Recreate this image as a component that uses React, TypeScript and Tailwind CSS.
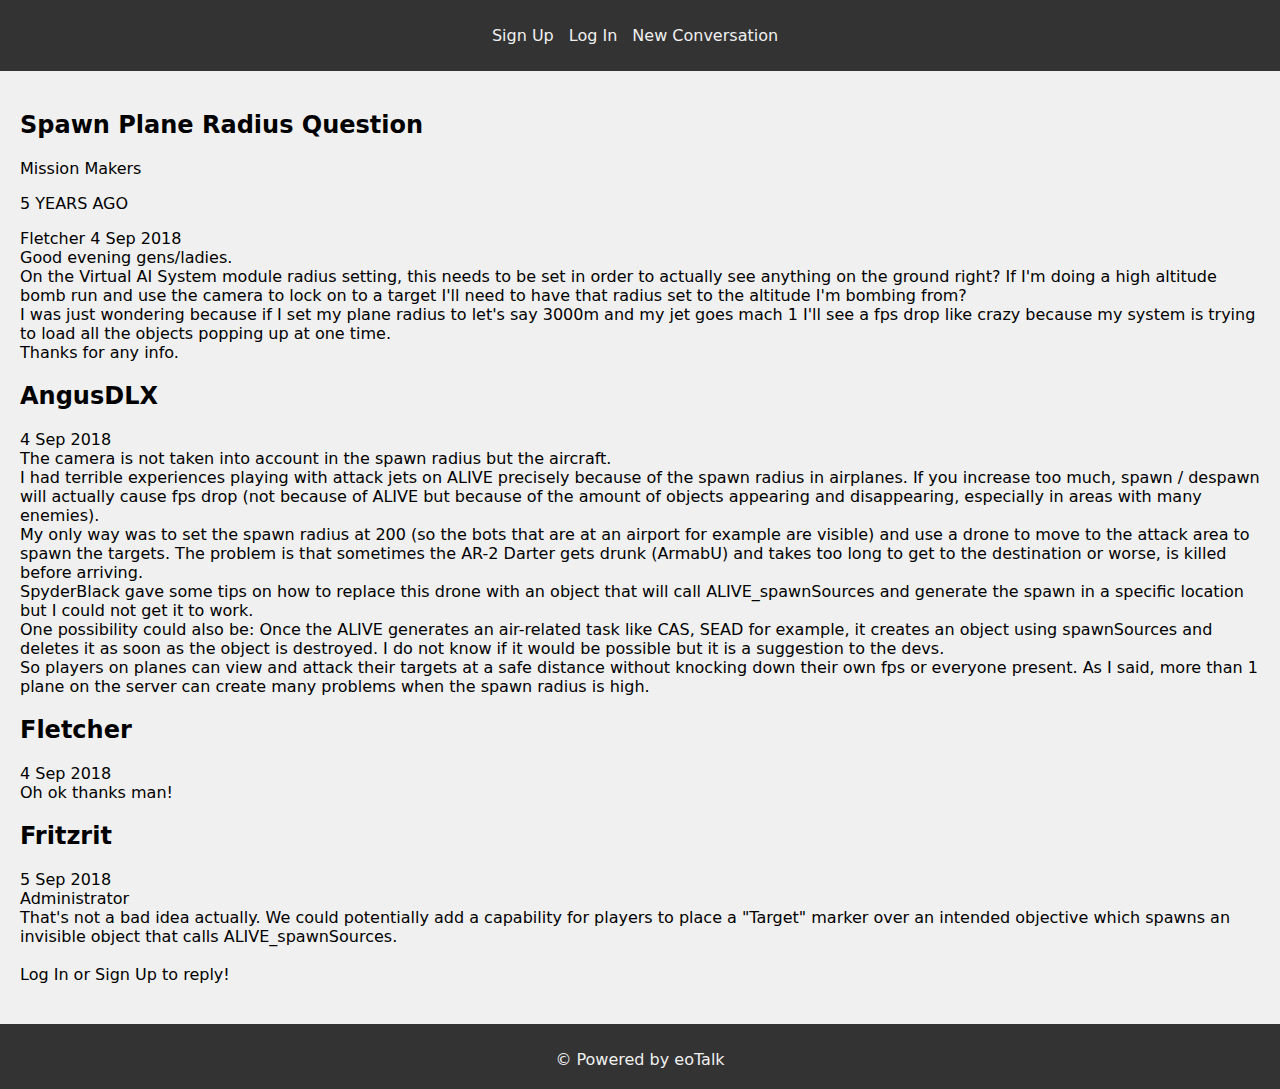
const posts = [
	{
		author: 'AngusDLX',
		date: '4 Sep 2018',
		lines: [
			'The camera is not taken into account in the spawn radius but the aircraft.',
			'I had terrible experiences playing with attack jets on ALIVE precisely because of the spawn radius in airplanes. If you increase too much, spawn / despawn will actually cause fps drop (not because of ALIVE but because of the amount of objects appearing and disappearing, especially in areas with many enemies).',
			'My only way was to set the spawn radius at 200 (so the bots that are at an airport for example are visible) and use a drone to move to the attack area to spawn the targets. The problem is that sometimes the AR-2 Darter gets drunk (ArmabU) and takes too long to get to the destination or worse, is killed before arriving.',
			'SpyderBlack gave some tips on how to replace this drone with an object that will call ALIVE_spawnSources and generate the spawn in a specific location but I could not get it to work.',
			'One possibility could also be: Once the ALIVE generates an air-related task like CAS, SEAD for example, it creates an object using spawnSources and deletes it as soon as the object is destroyed. I do not know if it would be possible but it is a suggestion to the devs.',
			'So players on planes can view and attack their targets at a safe distance without knocking down their own fps or everyone present. As I said, more than 1 plane on the server can create many problems when the spawn radius is high.',
		],
	},
	{
		author: 'Fletcher',
		date: '4 Sep 2018',
		lines: ['Oh ok thanks man!'],
	},
	{
		author: 'Fritzrit',
		date: '5 Sep 2018',
		lines: [
			'Administrator',
			'That\'s not a bad idea actually. We could potentially add a capability for players to place a "Target" marker over an intended objective which spawns an invisible object that calls ALIVE_spawnSources.',
		],
	},
];

const App = () => {
	return (
		<div className="min-h-screen bg-[#f0f0f0] text-base leading-[normal] text-black" style={{ fontFamily: '"DejaVu Sans", sans-serif' }}>
			<header className="flex h-[71px] items-center justify-center gap-[15px] bg-[#333333] pr-[10px] text-[#f0f0f0]">
				<a href="#">Sign Up</a>
				<a href="#">Log In</a>
				<a href="#">New Conversation</a>
			</header>
			<main className="px-5 pt-5 pb-[40px]">
				<h2 className="my-[20px] text-2xl leading-[normal] font-bold">Spawn Plane Radius Question</h2>
				<p className="my-4">Mission Makers</p>
				<p className="my-4">5 YEARS AGO</p>
				<div>
					<div>Fletcher 4 Sep 2018</div>
					<div>Good evening gens/ladies.</div>
					<div>
						On the Virtual AI System module radius setting, this needs to be set in order to actually see anything on the ground right? If I'm doing a high altitude bomb run and use the camera to lock on to a target I'll need to have that radius set to the altitude I'm bombing from?
					</div>
					<div>
						I was just wondering because if I set my plane radius to let's say 3000m and my jet goes mach 1 I'll see a fps drop like crazy because my system is trying to load all the objects popping up at one time.
					</div>
					<div>Thanks for any info.</div>
				</div>
				{posts.map((post, index) => (
					<div key={index}>
						<h2 className="my-[20px] text-2xl leading-[normal] font-bold">{post.author}</h2>
						<div>{post.date}</div>
						{post.lines.map((line, i) => (
							<div key={i}>{line}</div>
						))}
					</div>
				))}
				<p className="mt-[19px]">
					<a href="#">Log In</a> or <a href="#">Sign Up</a> to reply!
				</p>
			</main>
			<footer className="flex h-[70px] items-center justify-center bg-[#333333] text-[#f0f0f0]">© Powered by eoTalk</footer>
		</div>
	);
};

export default App;
